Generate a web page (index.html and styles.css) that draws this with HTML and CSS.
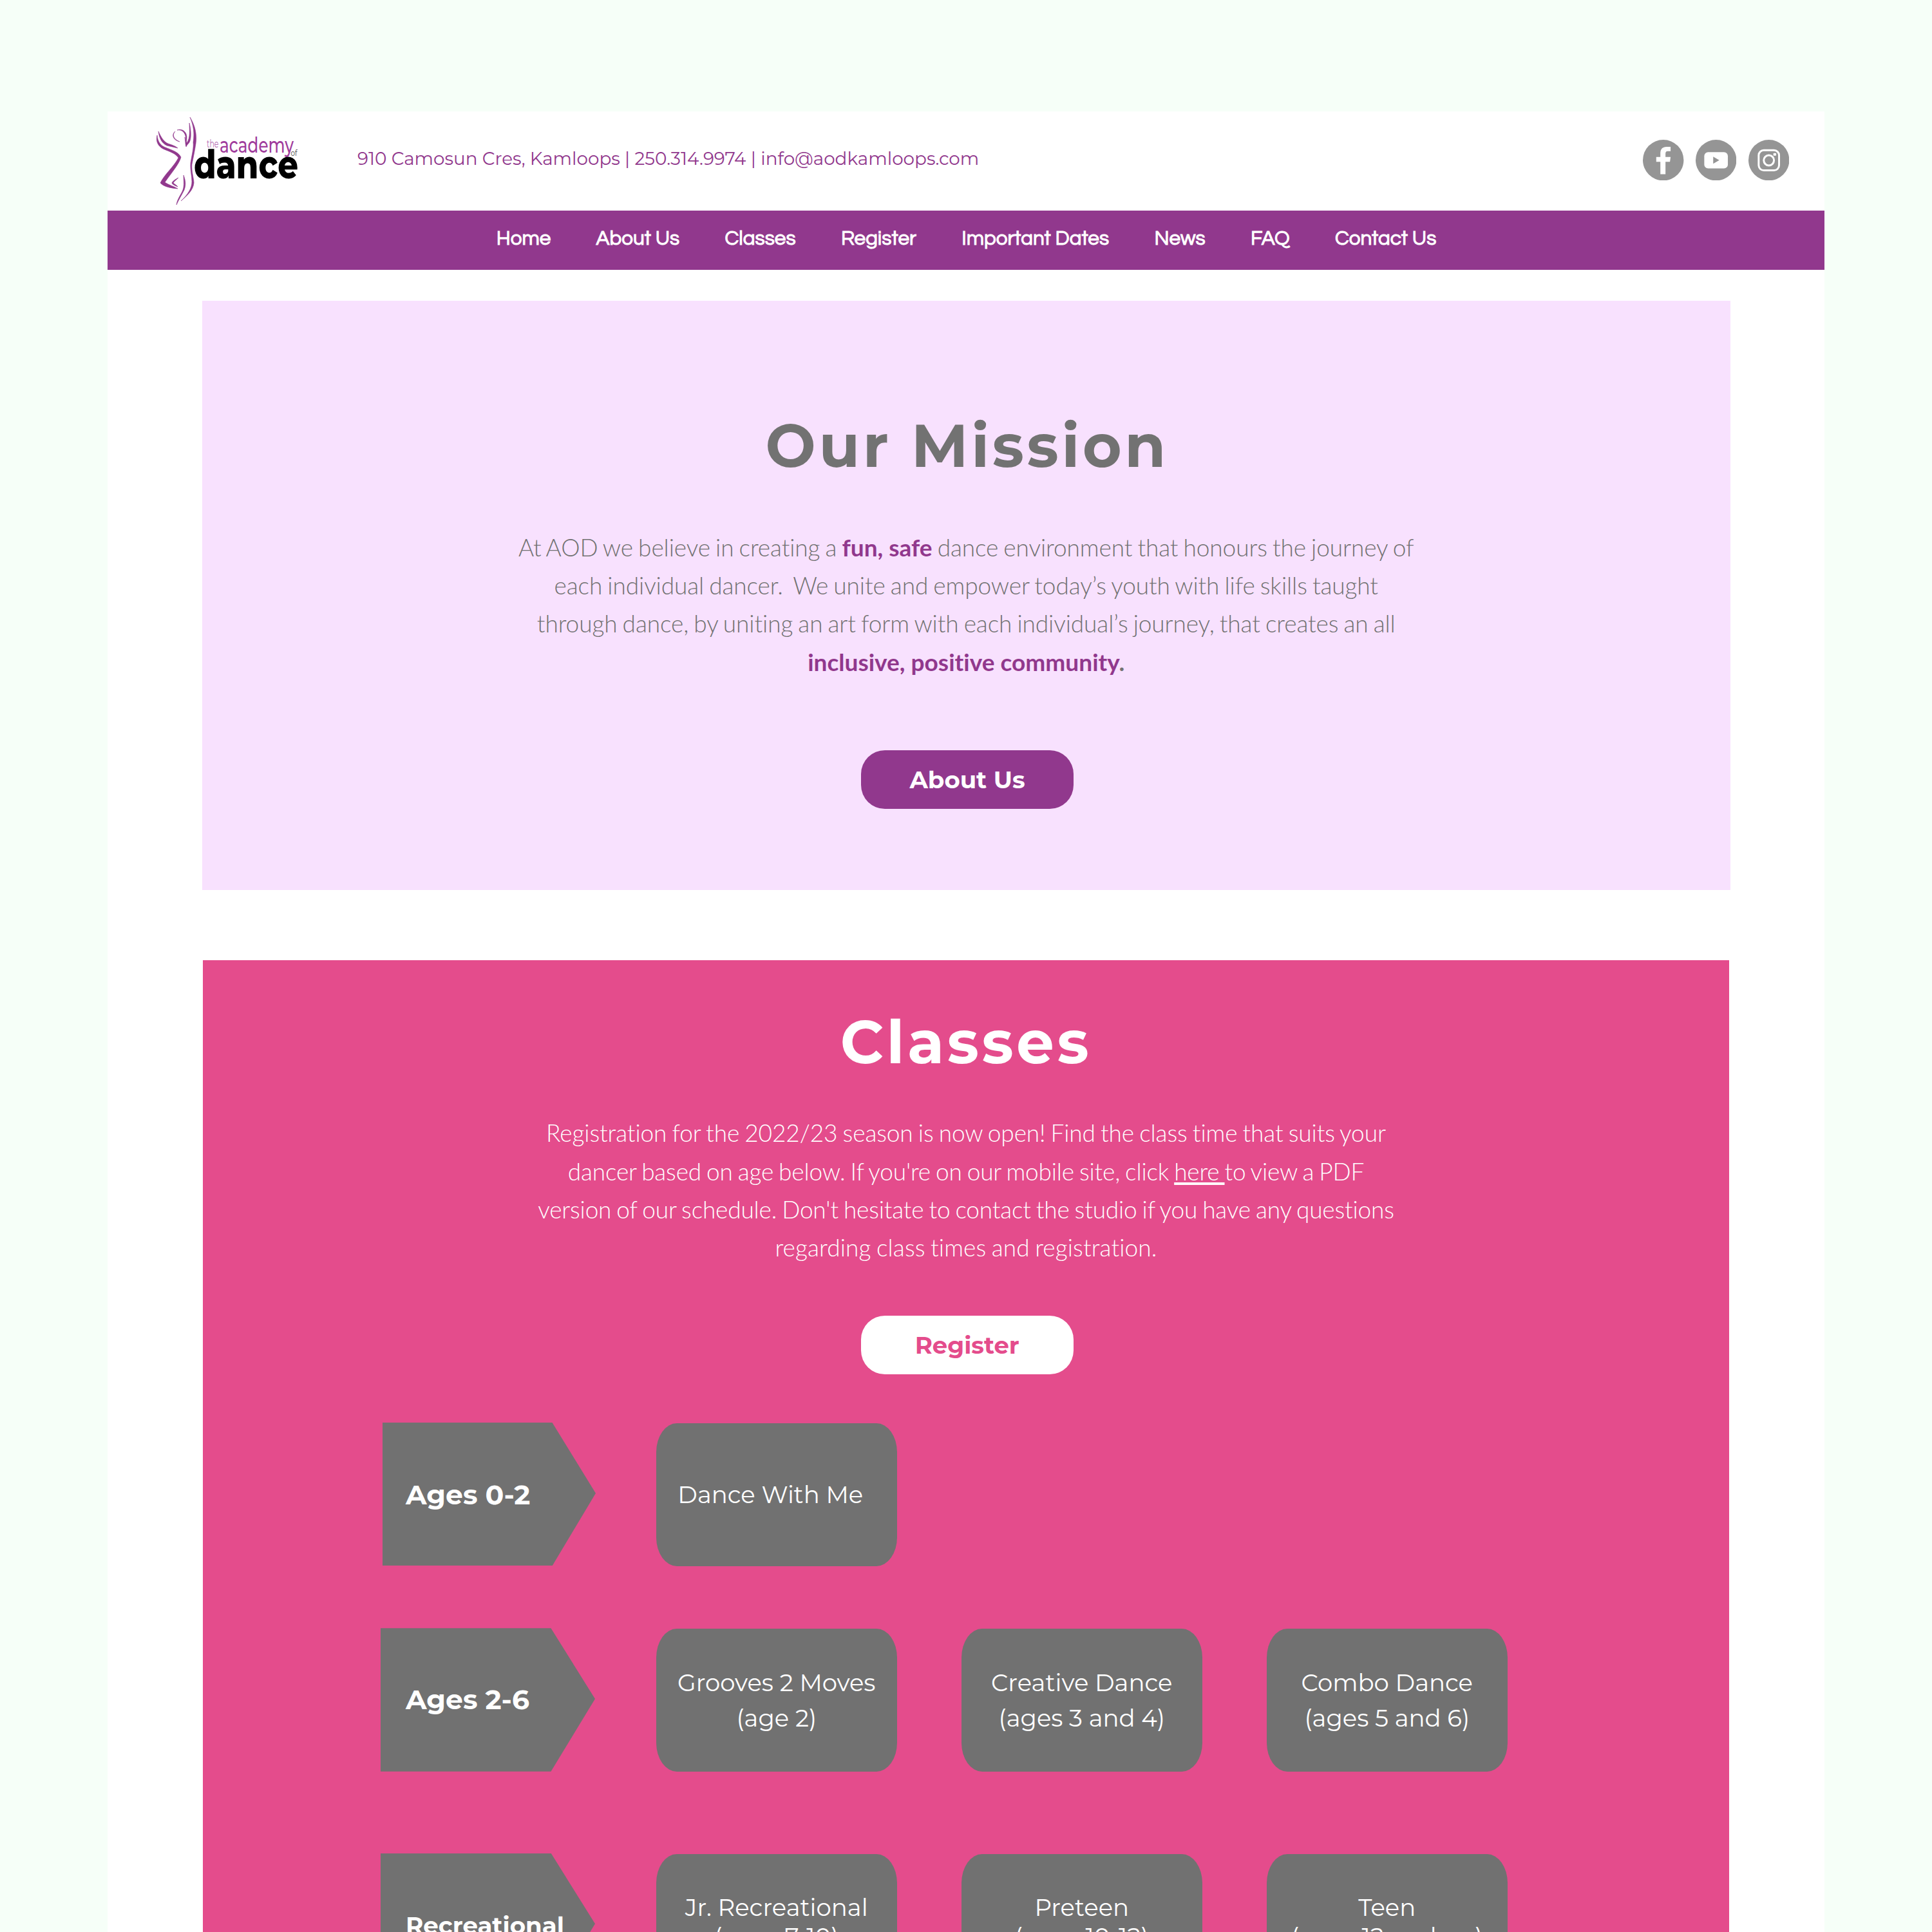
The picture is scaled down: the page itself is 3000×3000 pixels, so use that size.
FILE: index.html
```
<!DOCTYPE html>
<html lang="en">
<head>
<meta charset="utf-8">
<title>The Academy of Dance</title>
<link rel="stylesheet" href="styles.css">
</head>
<body>
<div class="page">
  <header class="header">
    <svg class="logo" viewBox="167 173 333 153" role="img" aria-label="the academy of dance">
      <g class="logo-figure">
        <path d="M295 182C303 195 306 209 304 223C302 236 300 245 298 255C297 266 301 277 301 284C300 296 290 304 281 312C292 302 298 292 298 282C298 273 295 263 296 253C298 240 301 230 300 221C302 207 301 196 295 182Z"/>
        <path d="M294 191C297 203 297 216 294 221C292 224 290 225 289 228L287 213C288 218 289 221 290 222C296 214 294 202 294 191Z"/>
        <path d="M275 202C282 199 290 204 290 213C290 218 289 223 289 227C287 222 289 216 288 211C286 204 281 201 275 202Z"/>
        <path d="M272 204C267 209 269 216 279 220C270 218 265 210 272 204Z"/>
        <path d="M246 204C250 213 254 220 261 223C267 225 273 227 276 230C270 229 265 227 259 226C250 222 247 212 246 204Z"/>
        <path d="M244 210C245 220 249 226 257 229C267 233 277 236 281 244C278 255 268 266 256 283C263 288 270 289 276 293C265 292 254 290 249 284C255 271 270 259 277 245C273 238 262 235 253 231C244 226 242 218 244 210Z"/>
        <path d="M277 276C273 280 271 281 269 284C271 286 275 288 276 290C271 288 267 286 267 284C268 281 273 278 277 276Z"/>
        <path d="M285 272C288 280 289 287 286 295C282 303 278 309 274 318C275 308 284 299 285 291C286 285 285 279 285 272Z"/>
      </g>
      <text class="logo-the" x="321" y="229" textLength="18.500" lengthAdjust="spacingAndGlyphs">the</text>
      <text class="logo-academy" x="341" y="237.300" textLength="115" lengthAdjust="spacingAndGlyphs">academy</text>
      <text class="logo-dance" x="301" y="276.500" textLength="162" lengthAdjust="spacingAndGlyphs">dance</text>
      <text class="logo-of" x="451.500" y="242" textLength="10" lengthAdjust="spacingAndGlyphs">of</text>
    </svg>
    <p class="contact">910 Camosun Cres, Kamloops | 250.314.9974 | info@aodkamloops.com</p>
    <div class="social">
      <svg viewBox="0 0 64 64" aria-label="Facebook"><circle cx="32" cy="32" r="32"/><path class="glyph" d="M27.500 54V34.500H21V27h6.500v-5.500C27.500 14.500 31 11 37 11h6.500v7H39c-2.500 0-3.500 1.500-3.500 4v5h8l-1 7.500h-7V54Z"/></svg>
      <svg viewBox="0 0 64 64" aria-label="YouTube"><circle cx="32" cy="32" r="32"/><rect class="glyph" x="13.500" y="19.500" width="37" height="25.500" rx="6"/><path d="M27.500 26.500v11l9.500-5.500Z"/></svg>
      <svg viewBox="0 0 64 64" aria-label="Instagram"><circle cx="32" cy="32" r="32"/><rect class="line" x="16" y="16.500" width="32" height="31.500" rx="8"/><circle class="line" cx="32" cy="32.300" r="8"/><rect class="glyph" x="39" y="21" width="4.500" height="4" rx="1"/></svg>
    </div>
  </header>
  <nav class="nav">
    <a>Home</a><a>About Us</a><a>Classes</a><a>Register</a><a>Important Dates</a><a>News</a><a>FAQ</a><a>Contact Us</a>
  </nav>
  <section class="mission">
    <h2>Our Mission</h2>
    <p>At AOD we believe in creating a <b>fun, safe</b> dance environment that honours the journey of<br>each individual dancer.&nbsp; We unite and empower today’s youth with life skills taught<br>through dance, by uniting an art form with each individual’s journey, that creates an all<br><b>inclusive, positive community</b><b class="dot">.</b></p>
    <a class="button">About Us</a>
  </section>
  <section class="classes">
    <h2>Classes</h2>
    <p>Registration for the 2022/23 season is now open! Find the class time that suits your<br><span class="tight">dancer based on age below. If you're on our mobile site, click <a class="link">here </a>to view a PDF</span><br><span class="tight">version of our schedule. Don't hesitate to contact the studio if you have any questions</span><br><span class="loose">regarding class times and registration.</span></p>
    <a class="button">Register</a>
    <div class="row row-first">
      <h3 class="arrow">Ages 0-2</h3>
      <div class="card">Dance With Me</div>
    </div>
    <div class="row row-second">
      <h3 class="arrow">Ages 2-6</h3>
      <div class="card">Grooves 2 Moves<br>(age 2)</div>
      <div class="card">Creative Dance<br>(ages 3 and 4)</div>
      <div class="card">Combo Dance<br>(ages 5 and 6)</div>
    </div>
    <div class="row row-third">
      <h3 class="arrow">Recreational</h3>
      <div class="card">Jr. Recreational<br>(ages 7-10)</div>
      <div class="card">Preteen<br>(ages 10-12)</div>
      <div class="card">Teen<br>(ages 12 and up)</div>
    </div>
  </section>
</div>
</body>
</html>
```
FILE: styles.css
```
* { box-sizing: border-box; margin: 0; padding: 0; }

body {
  width: 3000px;
  height: 3000px;
  overflow: hidden;
  padding: 173px 167px 0;
  background: #f6fff8;
  font-family: Montserrat, Inter, sans-serif;
}

.page { background: #fff; height: 2827px; overflow: hidden; }

.header { display: flex; align-items: flex-start; height: 153.5px; padding-right: 55px; }
.logo { width: 333px; height: 153px; }
.logo-figure { fill: #91388d; stroke: #91388d; stroke-width: .6; }
.logo text { font-family: Montserrat, Lato, sans-serif; }
.logo .logo-the { font-size: 17px; font-weight: 400; fill: #b56cb2; }
.logo .logo-academy { font-size: 32.5px; font-weight: 500; fill: #a03c9c; }
.logo .logo-dance { font-size: 62px; font-weight: 800; fill: #000; }
.logo .logo-of { font-size: 13px; font-weight: 400; fill: #444; }

.contact {
  margin: 53px 0 0 55px;
  font-size: 27.8px;
  line-height: 40px;
  white-space: nowrap;
  color: #91388d;
}

.social { display: flex; gap: 18.2px; margin: 43.5px 0 0 auto; }
.social svg { width: 63.4px; height: 63.4px; fill: #959595; }
.social .glyph { fill: #fff; }
.social .line { fill: none; stroke: #fff; stroke-width: 3; }

.nav {
  display: flex;
  justify-content: center;
  gap: 70.3px;
  height: 92px;
  padding: 24px 0 0 1px;
  background: #91388d;
  color: #fff;
  font: 700 31.5px/40px Questrial, Inter, sans-serif;
  font-feature-settings: "cv11";
}

.mission, .classes { display: flex; flex-direction: column; align-items: center; text-align: center; }
.mission { width: 2373.5px; height: 915px; margin: 48.5px 0 0 146.5px; padding-top: 168.3px; background: #f8e1fe; }
.classes { width: 2370px; height: 1520px; margin: 109px 0 0 148px; padding-top: 70.5px; background: #e44c8c; color: #fff; }

h2 { font-size: 92.65px; line-height: 112px; font-weight: 700; letter-spacing: .05em; }
.mission h2 { padding: 1px 0 0 3px; margin-bottom: -1px; color: #727272; }

p { font-weight: 300; }
.mission p, .classes p {
  font-family: Lato, sans-serif;
  font-size: 37.06px;
  line-height: 59.3px;
  letter-spacing: -.12px;
  word-spacing: -1.8px;
  white-space: nowrap;
}
.contact { font-weight: 400; }
.mission p { margin-top: 72.4px; color: #727272; }
.classes p { margin-top: 55.8px; }
.classes .tight { letter-spacing: -.2px; }
.classes .loose { letter-spacing: .11px; }
.mission b {
  font-weight: 700;
  letter-spacing: 0;
  word-spacing: 0;
  font-variant-ligatures: none;
  color: #91388d;
}
.mission .dot { color: #727272; }
.link { text-decoration: underline; text-decoration-thickness: 3.7px; text-underline-offset: 3px; }

.button {
  width: 330px;
  height: 91px;
  margin-left: 3.5px;
  border-radius: 37px;
  font-size: 37.06px;
  line-height: 92px;
  font-weight: 700;
}
.mission .button { margin-top: 108.4px; background: #91388d; color: #fff; }
.classes .button { margin-top: 77px; background: #fff; color: #e44c8c; flex: none; }

.row {
  display: grid;
  grid-template-columns: 327.5px repeat(3, 373.5px);
  column-gap: 100.5px;
  align-self: flex-start;
  margin-left: 276px;
}
.row-first { margin-top: 74.5px; }
.row-second { margin-top: 96.3px; }
.row-third { margin-top: 126.3px; }

.arrow {
  width: 333px;
  height: 222.5px;
  padding-left: 39px;
  background: #717171;
  clip-path: polygon(0 0, 264.5px 0, 100% 49.3%, 264.5px 100%, 0 100%);
  font-size: 42.5px;
  line-height: 222px;
  font-weight: 700;
  text-align: left;
}
.row-first .arrow { width: 331px; margin-left: 3px; padding-left: 36px; line-height: 224px; clip-path: polygon(0 0, 263.5px 0, 100% 49.3%, 263.5px 100%, 0 100%); }
.row-third .arrow { font-size: 37.2px; line-height: 224px; }

.card {
  display: flex;
  flex-direction: column;
  justify-content: center;
  height: 222px;
  margin-top: 1px;
  border-radius: 32px / 45px;
  background: #717171;
  font-size: 37.06px;
  line-height: 55.5px;
  font-weight: 400;
}
.row-first .card { padding-right: 19px; }
.row-third .card { padding-bottom: 11px; line-height: 45px; }
```
